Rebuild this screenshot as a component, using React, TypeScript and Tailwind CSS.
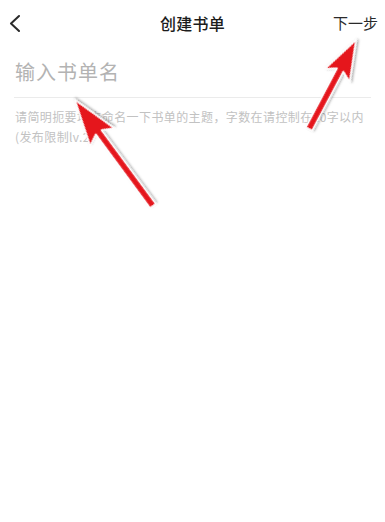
const font = "font-['Noto_Sans_CJK_SC','Noto_Sans',sans-serif]"

type ArrowProps = { x1: number; y1: number; x2: number; y2: number; head: number; half: number; shaft: number }

// annotation arrow drawn from tail (x1,y1) to tip (x2,y2)
function Arrow({ x1, y1, x2, y2, head, half, shaft }: ArrowProps) {
  const dx = x2 - x1
  const dy = y2 - y1
  const len = Math.sqrt(dx * dx + dy * dy)
  const angle = (Math.atan2(dy, dx) * 180) / Math.PI
  const b = len - head
  const notch = 6
  const pts = [
    [0, -shaft],
    [b + notch, -shaft],
    [b, -half],
    [len, 0],
    [b, half],
    [b + notch, shaft],
    [0, shaft],
  ]
    .map((p) => p.join(','))
    .join(' ')
  return (
    <g transform={`translate(${x1} ${y1}) rotate(${angle})`} filter="url(#shadow)">
      <polygon points={pts} fill="#e5121c" stroke="#ffffff" strokeWidth="1.6" strokeLinejoin="round" />
    </g>
  )
}

export default function App() {
  return (
    <div className={`relative w-[385px] h-[522px] overflow-hidden bg-white ${font}`}>
      <header className="grid grid-cols-[70px_1fr_70px] items-center h-[46px]">
        <div className="pl-[9px]">
          <svg width="12" height="18" viewBox="0 0 12 18">
            <polyline points="10,2 2,9.5 10,17" fill="none" stroke="#2a2a2a" strokeWidth="2" strokeLinecap="round" strokeLinejoin="round" />
          </svg>
        </div>
        <h1 className="text-center text-[16px] font-medium text-[#1c1c1c] tracking-[0.3px]">创建书单</h1>
        <div className="text-right pr-[7px] text-[15px] text-[#2a2a2a]">下一步</div>
      </header>

      <div className="h-[51px] flex items-center pl-[15px]">
        <span className="text-[20px] tracking-[1px] text-[#b3b3b3]">输入书单名</span>
      </div>

      <div className="mx-[14px] h-px bg-[#ebebeb]" />

      <p className="px-[15px] pt-[9px] text-[12px] leading-[20px] tracking-[0.4px] text-[#c2c2c2] whitespace-nowrap">
        请简明扼要地来命名一下书单的主题，字数在请控制在20字以内
        <br />
        (发布限制lv.2)
      </p>

      <svg className="absolute inset-0 pointer-events-none" width="385" height="522" viewBox="0 0 385 522">
        <defs>
          <filter id="shadow" x="-20%" y="-20%" width="140%" height="140%">
            <feDropShadow dx="1" dy="1.5" stdDeviation="1.2" floodColor="#000" floodOpacity="0.35" />
          </filter>
        </defs>
        <Arrow x1={153} y1={206} x2={75} y2={100} head={46} half={15} shaft={3.5} />
        <Arrow x1={309} y1={129} x2={356} y2={40} head={40} half={14} shaft={3.5} />
      </svg>
    </div>
  )
}
